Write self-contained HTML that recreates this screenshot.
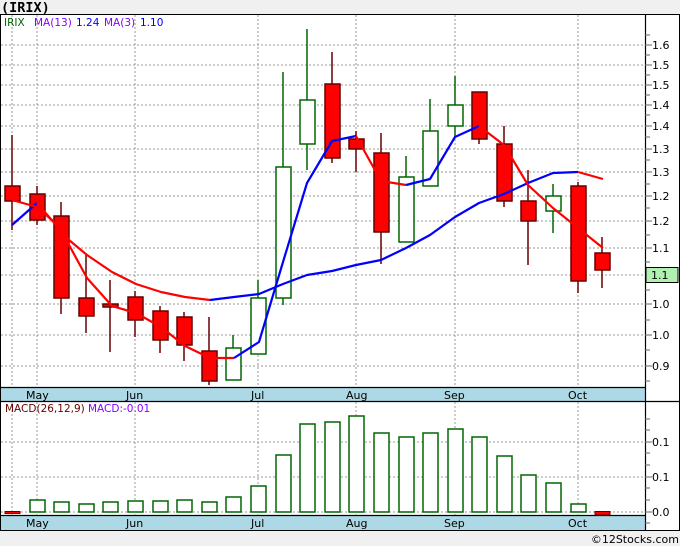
<!DOCTYPE html>
<html><head><meta charset="utf-8"><style>
html,body{margin:0;padding:0;background:#f0f0f0;}
svg{display:block;font-family:"DejaVu Sans","Liberation Sans",sans-serif;}
</style></head><body>
<svg width="680" height="546" viewBox="0 0 680 546" xmlns="http://www.w3.org/2000/svg">
<rect x="0" y="0" width="680" height="546" fill="#f0f0f0"/>
<text x="1" y="12" font-size="13.5" font-weight="bold" fill="#000" font-family="DejaVu Sans Mono,monospace">(IRIX)</text>
<rect x="0.5" y="14.5" width="679" height="516" fill="#fff" stroke="#000"/>
<rect x="1" y="387" width="644" height="14" fill="#add8e6"/>
<rect x="1" y="515" width="644" height="15" fill="#add8e6"/>
<g stroke="#000" stroke-width="1.2">
<line x1="0" y1="387.5" x2="645" y2="387.5"/>
<line x1="0" y1="401.5" x2="680" y2="401.5"/>
<line x1="0" y1="515.5" x2="645" y2="515.5"/>
<line x1="645.5" y1="14" x2="645.5" y2="530"/>
</g>
<g stroke="#999" stroke-dasharray="2,2" stroke-width="1">
<line x1="12" y1="15" x2="12" y2="387"/><line x1="37" y1="15" x2="37" y2="387"/><line x1="135" y1="15" x2="135" y2="387"/><line x1="258" y1="15" x2="258" y2="387"/><line x1="356" y1="15" x2="356" y2="387"/><line x1="455" y1="15" x2="455" y2="387"/><line x1="578" y1="15" x2="578" y2="387"/>
<line x1="12" y1="402" x2="12" y2="515"/><line x1="37" y1="402" x2="37" y2="515"/><line x1="135" y1="402" x2="135" y2="515"/><line x1="258" y1="402" x2="258" y2="515"/><line x1="356" y1="402" x2="356" y2="515"/><line x1="455" y1="402" x2="455" y2="515"/><line x1="578" y1="402" x2="578" y2="515"/>
<line x1="1" y1="45" x2="645" y2="45"/><line x1="1" y1="65" x2="645" y2="65"/><line x1="1" y1="85" x2="645" y2="85"/><line x1="1" y1="105" x2="645" y2="105"/><line x1="1" y1="126" x2="645" y2="126"/><line x1="1" y1="149" x2="645" y2="149"/><line x1="1" y1="172" x2="645" y2="172"/><line x1="1" y1="196" x2="645" y2="196"/><line x1="1" y1="221" x2="645" y2="221"/><line x1="1" y1="248" x2="645" y2="248"/><line x1="1" y1="275" x2="645" y2="275"/><line x1="1" y1="304" x2="645" y2="304"/><line x1="1" y1="335" x2="645" y2="335"/><line x1="1" y1="366" x2="645" y2="366"/>
<line x1="1" y1="442" x2="645" y2="442"/><line x1="1" y1="477" x2="645" y2="477"/><line x1="1" y1="512" x2="645" y2="512"/>
</g>
<g stroke="#666" stroke-width="1">
<line x1="645" y1="35" x2="650" y2="35"/><line x1="645" y1="45" x2="652" y2="45"/><line x1="645" y1="55" x2="650" y2="55"/><line x1="645" y1="65" x2="652" y2="65"/><line x1="645" y1="75" x2="650" y2="75"/><line x1="645" y1="85" x2="652" y2="85"/><line x1="645" y1="95" x2="650" y2="95"/><line x1="645" y1="105" x2="652" y2="105"/><line x1="645" y1="115" x2="650" y2="115"/><line x1="645" y1="126" x2="652" y2="126"/><line x1="645" y1="137" x2="650" y2="137"/><line x1="645" y1="149" x2="652" y2="149"/><line x1="645" y1="160" x2="650" y2="160"/><line x1="645" y1="172" x2="652" y2="172"/><line x1="645" y1="184" x2="650" y2="184"/><line x1="645" y1="196" x2="652" y2="196"/><line x1="645" y1="208" x2="650" y2="208"/><line x1="645" y1="221" x2="652" y2="221"/><line x1="645" y1="235" x2="650" y2="235"/><line x1="645" y1="248" x2="652" y2="248"/><line x1="645" y1="262" x2="650" y2="262"/><line x1="645" y1="290" x2="650" y2="290"/><line x1="645" y1="304" x2="652" y2="304"/><line x1="645" y1="320" x2="650" y2="320"/><line x1="645" y1="335" x2="652" y2="335"/><line x1="645" y1="350" x2="650" y2="350"/><line x1="645" y1="366" x2="652" y2="366"/><line x1="645" y1="381" x2="650" y2="381"/>
<line x1="645" y1="419" x2="650" y2="419"/><line x1="645" y1="430" x2="650" y2="430"/><line x1="645" y1="442" x2="652" y2="442"/><line x1="645" y1="453" x2="650" y2="453"/><line x1="645" y1="465" x2="650" y2="465"/><line x1="645" y1="477" x2="652" y2="477"/><line x1="645" y1="488" x2="650" y2="488"/><line x1="645" y1="500" x2="650" y2="500"/><line x1="645" y1="512" x2="652" y2="512"/><line x1="645" y1="523" x2="650" y2="523"/>
</g>
<g font-size="11" fill="#000">
<text x="652" y="49">1.6</text><text x="652" y="69">1.5</text><text x="652" y="89">1.5</text><text x="652" y="109">1.4</text><text x="652" y="130">1.4</text><text x="652" y="153">1.3</text><text x="652" y="176">1.3</text><text x="652" y="200">1.2</text><text x="652" y="225">1.2</text><text x="652" y="252">1.1</text><text x="652" y="308">1.0</text><text x="652" y="339">1.0</text><text x="652" y="370">0.9</text>
<text x="652" y="446">0.1</text><text x="652" y="481">0.1</text><text x="652" y="516">0.0</text>
</g>
<rect x="646" y="267.5" width="32" height="15" fill="#b0f0b0" stroke="#000"/>
<text x="651" y="279" font-size="11" fill="#000">1.1</text>
<g font-size="11" fill="#000">
<text x="26" y="399">May</text><text x="126" y="399">Jun</text><text x="251" y="399">Jul</text><text x="346" y="399">Aug</text><text x="444" y="399">Sep</text><text x="568" y="399">Oct</text>
<text x="26" y="527">May</text><text x="126" y="527">Jun</text><text x="251" y="527">Jul</text><text x="346" y="527">Aug</text><text x="444" y="527">Sep</text><text x="568" y="527">Oct</text>
</g>
<g font-size="10.5">
<text x="4" y="26" fill="#060">IRIX</text>
<text x="34" y="26" fill="#80f">MA(13)</text>
<text x="76" y="26" fill="#00f">1.24</text>
<text x="104" y="26" fill="#80f">MA(3)</text>
<text x="140" y="26" fill="#00f">1.10</text>
<text x="5" y="412" fill="#600">MACD(26,12,9)</text>
<text x="88" y="412" fill="#80f">MACD:-0.01</text>
</g>
<g stroke-width="1.5">
<g stroke="#600">
<line x1="12" y1="135" x2="12" y2="230"/><line x1="37" y1="186" x2="37" y2="225"/><line x1="61" y1="202" x2="61" y2="314"/><line x1="86" y1="255" x2="86" y2="333"/><line x1="110" y1="280" x2="110" y2="352"/><line x1="135" y1="291" x2="135" y2="337"/><line x1="160" y1="306" x2="160" y2="353"/><line x1="184" y1="312" x2="184" y2="361"/><line x1="209" y1="317" x2="209" y2="385"/><line x1="332" y1="52" x2="332" y2="163"/><line x1="356" y1="131" x2="356" y2="172"/><line x1="381" y1="133" x2="381" y2="264"/><line x1="479" y1="92" x2="479" y2="144"/><line x1="504" y1="126" x2="504" y2="207"/><line x1="528" y1="170" x2="528" y2="265"/><line x1="578" y1="182" x2="578" y2="293"/><line x1="602" y1="237" x2="602" y2="288"/>
</g>
<g stroke="#060">
<line x1="233" y1="335" x2="233" y2="380"/><line x1="258" y1="280" x2="258" y2="354"/><line x1="283" y1="72" x2="283" y2="305"/><line x1="307" y1="29" x2="307" y2="170"/><line x1="406" y1="156" x2="406" y2="242"/><line x1="430" y1="99" x2="430" y2="186"/><line x1="455" y1="76" x2="455" y2="137"/><line x1="553" y1="184" x2="553" y2="233"/>
</g>
<g fill="#f00" stroke="#600">
<rect x="5" y="186" width="15" height="15"/><rect x="30" y="194" width="15" height="26"/><rect x="54" y="216" width="15" height="82"/><rect x="79" y="298" width="15" height="18"/><rect x="103" y="304" width="15" height="3"/><rect x="128" y="297" width="15" height="23"/><rect x="153" y="311" width="15" height="29"/><rect x="177" y="317" width="15" height="28"/><rect x="202" y="351" width="15" height="30"/><rect x="325" y="84" width="15" height="74"/><rect x="349" y="139" width="15" height="10"/><rect x="374" y="153" width="15" height="79"/><rect x="472" y="92" width="15" height="47"/><rect x="497" y="144" width="15" height="57"/><rect x="521" y="201" width="15" height="20"/><rect x="571" y="186" width="15" height="95"/><rect x="595" y="253" width="15" height="17"/>
</g>
<g fill="#fff" stroke="#060">
<rect x="226" y="348" width="15" height="32"/><rect x="251" y="298" width="15" height="56"/><rect x="276" y="167" width="15" height="131"/><rect x="300" y="100" width="15" height="44"/><rect x="399" y="177" width="15" height="65"/><rect x="423" y="131" width="15" height="55"/><rect x="448" y="105" width="15" height="21"/><rect x="546" y="196" width="15" height="15"/>
</g>
</g>
<g fill="none" stroke-width="2.2" stroke-linejoin="round">
<polyline stroke="#00f" points="12,225 37,203"/>
<polyline stroke="#f00" points="12,200 37,207 61,228 69,240 87,255 112,272 136,284 161,292 185,297 210,300"/>
<polyline stroke="#00f" points="210,300 234,297 259,294 283,284 307,275 332,271 356,265 381,260 406,248 430,235 455,217 479,203 504,194 528,183 553,173 578,172"/>
<polyline stroke="#f00" points="578,172 603,179"/>
<polyline stroke="#f00" points="37,203 62,232 87,278 112,306 136,313 161,327 185,346 210,358 234,358"/>
<polyline stroke="#00f" points="234,358 259,342 283,262 307,183 332,141 356,136"/>
<polyline stroke="#f00" points="356,136 381,181 406,185"/>
<polyline stroke="#00f" points="406,185 430,179 455,137 479,126"/>
<polyline stroke="#f00" points="479,126 504,145 528,185 553,208 578,228 603,248"/>
</g>
<g fill="#fff" stroke="#060" stroke-width="1.5">
<rect x="30" y="500" width="15" height="12"/><rect x="54" y="502" width="15" height="10"/><rect x="79" y="504" width="15" height="8"/><rect x="103" y="502" width="15" height="10"/><rect x="128" y="501" width="15" height="11"/><rect x="153" y="501" width="15" height="11"/><rect x="177" y="500" width="15" height="12"/><rect x="202" y="502" width="15" height="10"/><rect x="226" y="497" width="15" height="15"/><rect x="251" y="486" width="15" height="26"/><rect x="276" y="455" width="15" height="57"/><rect x="300" y="424" width="15" height="88"/><rect x="325" y="422" width="15" height="90"/><rect x="349" y="416" width="15" height="96"/><rect x="374" y="433" width="15" height="79"/><rect x="399" y="437" width="15" height="75"/><rect x="423" y="433" width="15" height="79"/><rect x="448" y="429" width="15" height="83"/><rect x="472" y="437" width="15" height="75"/><rect x="497" y="456" width="15" height="56"/><rect x="521" y="475" width="15" height="37"/><rect x="546" y="483" width="15" height="29"/><rect x="571" y="504" width="15" height="8"/>
</g>
<g fill="#f00" stroke="#600" stroke-width="1">
<rect x="5" y="511.5" width="15" height="2"/><rect x="595" y="511.5" width="15" height="3.5"/>
</g>
<text x="679" y="543" font-size="11" fill="#000" text-anchor="end">©12Stocks.com</text>
</svg>
</body></html>
